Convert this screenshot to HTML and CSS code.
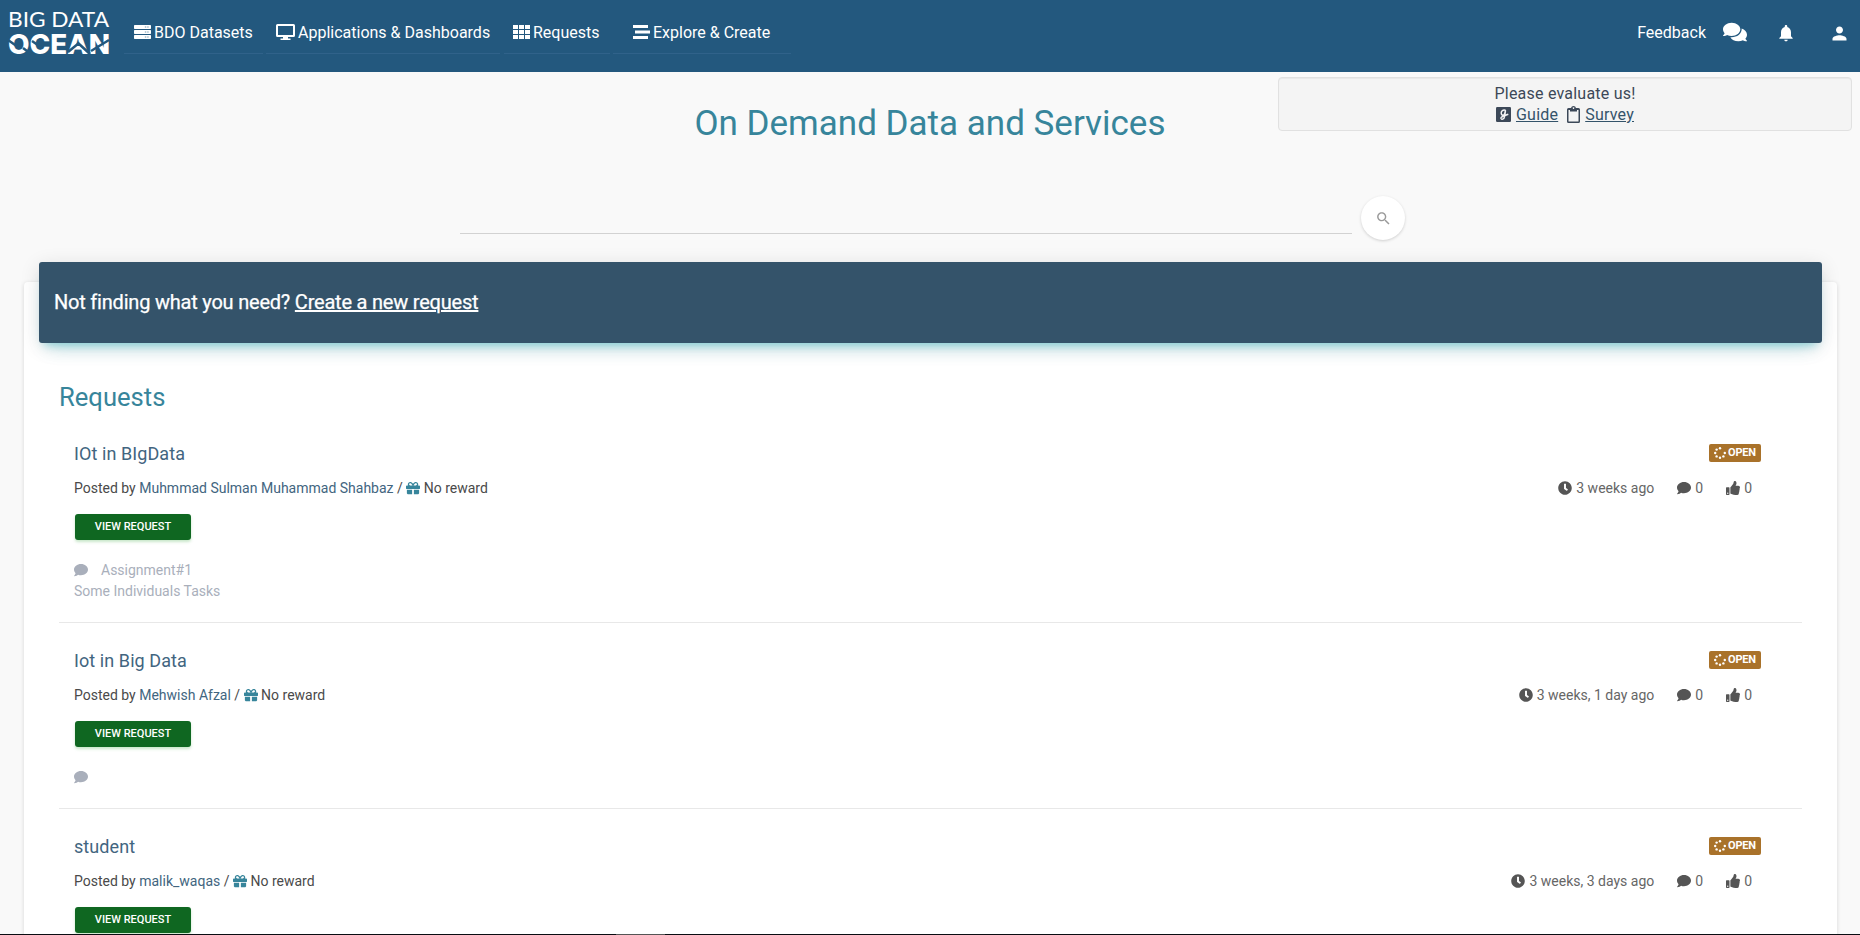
FILE: index.html
```html
<!DOCTYPE html>
<html lang="en">
<head>
<meta charset="utf-8">
<title>On Demand Data and Services</title>
<link rel="stylesheet" href="styles.css">
</head>
<body>
<svg class="defs" width="0" height="0">
  <symbol id="comment" viewBox="0 0 512 512"><path d="M256 32C114.6 32 0 125.1 0 240c0 49.6 21.4 95 57 130.700C44.500 421.100 2.700 466 2.200 466.500c-2.200 2.300-2.800 5.700-1.500 8.700S4.800 480 8 480c66.300 0 116-31.800 140.600-51.400 32.700 12.300 69 19.400 107.400 19.400 141.400 0 256-93.100 256-208S397.400 32 256 32z"/></symbol>
  <symbol id="clock" viewBox="0 0 512 512"><path d="M256 8C119 8 8 119 8 256s111 248 248 248 248-111 248-248S393 8 256 8zm57.100 350.100L224.900 294c-3.100-2.300-4.900-5.900-4.900-9.700V116c0-6.600 5.400-12 12-12h48c6.600 0 12 5.400 12 12v137.700l63.500 46.200c5.400 3.900 6.500 11.400 2.600 16.800l-28.200 38.800c-3.900 5.300-11.400 6.500-16.800 2.600z"/></symbol>
  <symbol id="thumb" viewBox="0 0 512 512"><path d="M104 224H24c-13.255 0-24 10.745-24 24v240c0 13.255 10.745 24 24 24h80c13.255 0 24-10.745 24-24V248c0-13.255-10.745-24-24-24zM64 472c-13.255 0-24-10.745-24-24s10.745-24 24-24 24 10.745 24 24-10.745 24-24 24zM384 81.452c0 42.416-25.970 66.208-33.277 94.548h101.723c33.397 0 59.397 27.746 59.553 58.098.084 17.938-7.546 37.249-19.439 49.197l-.11.11c9.836 23.337 8.237 56.037-9.308 79.469 8.681 25.895-.069 57.704-16.382 74.757 4.298 17.598 2.244 32.575-6.148 44.632C440.202 511.587 389.616 512 346.839 512l-2.845-.001c-48.287-.017-87.806-17.598-119.560-31.725-15.957-7.099-36.821-15.887-52.651-16.178-6.540-.120-11.783-5.457-11.783-11.998v-213.770c0-3.200 1.282-6.271 3.558-8.521 39.614-39.144 56.648-80.587 89.117-113.111 14.804-14.832 20.188-37.236 25.393-58.902C282.515 39.293 291.817 0 312 0c24 0 72 8 72 81.452z"/></symbol>
  <symbol id="gift" viewBox="0 0 512 512"><path d="M32 448c0 17.700 14.300 32 32 32h160V320H32v128zm256 32h160c17.700 0 32-14.300 32-32V320H288v160zm192-320h-42.100c6.200-12.100 10.100-25.500 10.100-40 0-48.500-39.500-88-88-88-41.600 0-68.500 21.300-103 68.300-34.500-47-61.400-68.300-103-68.300-48.500 0-88 39.500-88 88 0 14.500 3.800 27.900 10.100 40H32c-17.700 0-32 14.300-32 32v80c0 8.800 7.200 16 16 16h480c8.800 0 16-7.200 16-16v-80c0-17.700-14.300-32-32-32zm-326.100 0c-22.100 0-40-17.900-40-40s17.900-40 40-40c19.900 0 34.600 3.300 86.100 80h-86.100zm206.100 0h-86.100c51.400-76.500 65.700-80 86.100-80 22.100 0 40 17.900 40 40s-17.900 40-40 40z"/></symbol>
  <symbol id="spinner" viewBox="0 0 12 12"><circle cx="6" cy="1.300" r="1.200"/><circle cx="2.600" cy="2.600" r="1.200"/><circle cx="1.200" cy="6" r="1.200"/><circle cx="2.600" cy="9.400" r="1.200"/><circle cx="6" cy="10.800" r="1.200"/><circle cx="9.400" cy="9.400" r="1.200"/><circle cx="10.800" cy="6" r="1.200"/></symbol>
</svg>

<header class="navbar">
  <svg class="logo" width="101" height="44" viewBox="0 0 101 44">
    <text class="logo-top" x="-1" y="16.700" textLength="101" lengthAdjust="spacingAndGlyphs">BIG DATA</text>
    <text class="logo-bottom" x="-1" y="44" textLength="102" lengthAdjust="spacingAndGlyphs">OCEAN</text>
    <path class="logo-cut" d="M-1 30 9 37M14 38l8 6M23 31l10 7M48.500 31h11M48.500 38h11M59 42l11-9M69 33l12 11M82 41l18-11"/>
  </svg>
  <nav class="menu">
    <a class="menu-item datasets"><svg width="17" height="14" viewBox="0 0 18 14" preserveAspectRatio="none"><path d="M.7 0h16.600q.7 0 .7.700v2.600q0 .7-.7.700H.7Q0 4 0 3.300V.7Q0 0 .7 0zM.7 5h16.600q.7 0 .7.700v2.600q0 .7-.7.700H.7Q0 9 0 8.300V5.700Q0 5 .7 5zM.7 10h16.600q.7 0 .7.700v2.600q0 .7-.7.700H.7q-.7 0-.7-.7v-2.600q0-.7.700-.7z"/><path class="slot" d="M11.500 2h1.500m1 0h1.500m-4 5h1.500m1 0h1.500m-4 5h1.500m1 0h1.500"/></svg><span>BDO Datasets</span></a>
    <a class="menu-item apps"><svg width="19" height="16" viewBox="0 0 19 16"><path fill-rule="evenodd" d="M1.500 0h16Q19 0 19 1.500v10q0 1.500-1.500 1.500H12v1.500h2.500V16h-10v-1.500H7V13H1.500Q0 13 0 11.500v-10Q0 0 1.500 0zM2 2v9h15V2z"/></svg><span>Applications &amp; Dashboards</span></a>
    <a class="menu-item requests"><svg width="17" height="14" viewBox="0 0 17 14"><path d="M0 0h5v4H0zM6 0h5v4H6zM12 0h5v4h-5zM0 5h5v4H0zM6 5h5v4H6zM12 5h5v4h-5zM0 10h5v4H0zM6 10h5v4H6zM12 10h5v4h-5z"/></svg><span>Requests</span></a>
    <a class="menu-item explore"><svg width="17" height="14" viewBox="0 0 17 14"><path d="M0 0h15v3H0zM2 5.500h15v3H2zM0 11h15v3H0z"/></svg><span>Explore &amp; Create</span></a>
  </nav>
  <div class="user-nav">
    <span class="feedback">Feedback</span>
    <svg class="chat" width="24" height="20" viewBox="0 16 576 480"><path d="M416 192c0-88.400-93.100-160-208-160S0 103.600 0 192c0 34.300 14.100 65.900 38 92-13.400 30.200-35.500 54.200-35.800 54.500-2.200 2.300-2.800 5.700-1.500 8.700S4.800 352 8 352c36.600 0 66.900-12.300 88.700-25 32.200 15.700 70.300 25 111.300 25 114.900 0 208-71.600 208-160zm122 220c23.900-26 38-57.700 38-92 0-66.900-53.500-124.200-129.300-148.100.9 6.600 1.300 13.300 1.300 20.100 0 105.900-107.700 192-240 192-10.800 0-21.300-.8-31.700-1.900C207.800 439.600 281.800 480 368 480c41 0 79.100-9.200 111.300-25 21.800 12.700 52.100 25 88.700 25 3.200 0 6.100-1.900 7.300-4.800 1.300-2.900.7-6.300-1.500-8.700-.3-.3-22.400-24.200-35.800-54.500z"/></svg>
    <svg class="bell" width="20" height="20" viewBox="0 0 24 24"><path d="M12 22c1.100 0 2-.9 2-2h-4c0 1.100.89 2 2 2zm6-6v-5c0-3.070-1.640-5.640-4.500-6.320V4c0-.83-.67-1.500-1.500-1.500s-1.500.67-1.500 1.500v.68C7.630 5.360 6 7.920 6 11v5l-2 2v1h16v-1l-2-2z"/></svg>
    <svg class="person" width="21" height="21" viewBox="0 0 24 24"><path d="M12 12c2.210 0 4-1.790 4-4s-1.790-4-4-4-4 1.790-4 4 1.790 4 4 4zm0 2c-2.670 0-8 1.340-8 4v2h16v-2c0-2.660-5.330-4-8-4z"/></svg>
  </div>
</header>

<section class="hero">
  <h1>On Demand Data and Services</h1>
  <aside class="evaluate">
    <div>Please evaluate us!</div>
    <div class="evaluate-links">
      <svg width="15" height="15" viewBox="0 0 15 15"><rect width="15" height="15" rx="1.200"/><path class="g-mark" d="M9.500 3.300C7 2.500 5.200 4 5.200 6s1.500 2.800 2.800 1.700S9.500 3.300 9.500 3.300L8.600 9.500C8.200 12.500 5.300 13 4.900 11.200 4.700 9.500 8 9 12.300 7.200"/></svg>
      <a class="guide">Guide</a>
      <svg class="clipboard" width="13" height="17" viewBox="0 0 13 17"><path fill-rule="evenodd" d="M1.500 2H4Q4.500 0 6.500 0T9 2h2.500Q13 2 13 3.500v12q0 1.500-1.500 1.500h-10Q0 17 0 15.500v-12Q0 2 1.500 2zm0 2v11.500h10V4H10v1.500H3V4zM6.500 1.200a.8.8 0 1 0 .01 0z"/></svg>
      <a class="survey">Survey</a>
    </div>
  </aside>
  <form class="search">
    <input type="text" aria-label="Search">
    <button type="button" aria-label="Search"><svg width="17" height="17" viewBox="0 0 24 24"><path d="M15.500 14h-.79l-.28-.27C15.410 12.590 16 11.110 16 9.500 16 5.910 13.090 3 9.500 3S3 5.910 3 9.500 5.910 16 9.500 16c1.610 0 3.090-.59 4.230-1.570l.27.280v.79l5 4.990L20.490 19l-4.990-5zm-6 0C7.010 14 5 11.990 5 9.500S7.010 5 9.500 5 14 7.010 14 9.500 11.990 14 9.500 14z"/></svg></button>
  </form>
</section>

<main class="card">
  <div class="banner"><span>Not finding what you need? <a>Create a new request</a></span></div>
  <h2>Requests</h2>

  <article class="request">
    <div class="info">
      <h3>IOt in BIgData</h3>
      <p class="posted">Posted by <a>Muhmmad Sulman Muhammad Shahbaz</a> / <svg class="icon gift"><use href="#gift"/></svg> No reward</p>
      <button class="view" type="button">VIEW REQUEST</button>
      <p class="note"><svg class="icon"><use href="#comment"/></svg><span class="note-text">Assignment#1</span><br>Some Individuals Tasks</p>
    </div>
    <div class="status">
      <span class="badge"><svg><use href="#spinner"/></svg>OPEN</span>
      <div class="meta"><span><svg class="icon"><use href="#clock"/></svg>3 weeks ago</span><span><svg class="icon"><use href="#comment"/></svg>0</span><span><svg class="icon"><use href="#thumb"/></svg>0</span></div>
    </div>
  </article>

  <article class="request">
    <div class="info">
      <h3>Iot in Big Data</h3>
      <p class="posted">Posted by <a>Mehwish Afzal</a> / <svg class="icon gift"><use href="#gift"/></svg> No reward</p>
      <button class="view" type="button">VIEW REQUEST</button>
      <p class="note"><svg class="icon"><use href="#comment"/></svg></p>
    </div>
    <div class="status">
      <span class="badge"><svg><use href="#spinner"/></svg>OPEN</span>
      <div class="meta"><span><svg class="icon"><use href="#clock"/></svg>3 weeks, 1 day ago</span><span><svg class="icon"><use href="#comment"/></svg>0</span><span><svg class="icon"><use href="#thumb"/></svg>0</span></div>
    </div>
  </article>

  <article class="request">
    <div class="info">
      <h3>student</h3>
      <p class="posted">Posted by <a>malik_waqas</a> / <svg class="icon gift"><use href="#gift"/></svg> No reward</p>
      <button class="view" type="button">VIEW REQUEST</button>
    </div>
    <div class="status">
      <span class="badge"><svg><use href="#spinner"/></svg>OPEN</span>
      <div class="meta"><span><svg class="icon"><use href="#clock"/></svg>3 weeks, 3 days ago</span><span><svg class="icon"><use href="#comment"/></svg>0</span><span><svg class="icon"><use href="#thumb"/></svg>0</span></div>
    </div>
  </article>
</main>
<div class="bottom-edge"></div>
</body>
</html>
```

FILE: styles.css
```css
* { box-sizing: border-box; }
body {
  margin: 0;
  height: 935px;
  overflow: hidden;
  background: #f9f9f9;
  color: #3c4858;
  font: 400 14px/21px Roboto, "Liberation Sans", sans-serif;
}
h1, h2, h3, p { margin: 0; font-weight: 400; }
svg { display: block; fill: currentColor; flex: none; }
.defs { position: absolute; }

.navbar {
  display: flex;
  height: 72px;
  padding-left: 9px;
  background: #23587e;
  color: #fff;
  font-size: 16px;
  font-weight: 400;
}
.logo { margin-top: 10px; overflow: visible; }
.logo-top { font: 400 21px Lato, sans-serif; }
.logo-bottom { font: 800 27px Inter, sans-serif; }
.logo-cut { fill: none; stroke: #23587e; stroke-width: 2.5; }
.menu { display: flex; margin-left: 14px; }
.menu-item {
  display: flex;
  height: 54px;
  align-items: center;
  gap: 3px;
  padding: 11px 0 0 10px;
  border-bottom: 1px solid #30628a;
  white-space: nowrap;
}
.menu-item span { margin-top: 1px; }
.datasets { width: 139px; }
.apps { width: 234px; margin-left: 3px; }
.requests { width: 106px; margin-left: 4px; padding-left: 9px; }
.explore { width: 178px; margin-left: 3px; padding-left: 20px; }
.slot { stroke: #23587e; stroke-width: 1.2; opacity: .6; }
.user-nav { display: flex; align-items: center; height: 64px; margin-left: auto; padding-right: 10px; }
.feedback { margin-top: 1px; }
.chat { margin-left: 17px; }
.bell { margin-left: 29px; margin-top: 2px; }
.person { margin-left: 33px; margin-top: 2px; }

.hero {
  display: grid;
  grid-template: 159px 51px / 1278px 574px 8px;
}
h1 {
  grid-area: 1 / 1 / 2 / 4;
  padding-top: 31px;
  text-align: center;
  font-size: 35px;
  line-height: 42px;
  color: #37859b;
}
.evaluate {
  grid-area: 1 / 2;
  height: 54px;
  margin-top: 5px;
  padding-top: 5px;
  border: 1px solid #e1e1e1;
  border-radius: 4px;
  background: #f4f4f4;
  box-shadow: inset 0 1px 1px rgba(0, 0, 0, .05);
  text-align: center;
  font-size: 16px;
  letter-spacing: .22px;
}
.evaluate-links { display: flex; justify-content: center; align-items: center; }
.evaluate a { text-decoration: underline; color: #34536a; }
.guide { margin-left: 5px; }
.clipboard { margin: 0 5px 0 9px; }
.g-mark { fill: none; stroke: #f4f4f4; stroke-width: 1.5; }
.search { grid-area: 1 / 1 / 3 / 4; display: flex; align-self: start; width: 945px; margin: 124px 0 0 460px; }
.search input { width: 892px; height: 38px; padding: 0; border: 0; border-bottom: 1px solid #d2d2d2; background: none; }
.search button {
  display: grid;
  place-items: center;
  width: 44px;
  height: 44px;
  margin-left: 9px;
  padding: 0;
  border: 0;
  border-radius: 50%;
  background: #fff;
  color: #999;
  box-shadow: 0 1px 3px rgba(0, 0, 0, .17);
}

.card {
  display: flex;
  flex-direction: column;
  height: 680px;
  width: 1813px;
  margin-left: 24px;
  padding: 0 35px;
  border-radius: 4px;
  background: #fff;
  box-shadow: 0 1px 4px rgba(0, 0, 0, .14);
}
.banner {
  flex: none;
  display: flex;
  align-items: center;
  height: 81px;
  margin: -20px -20px 0;
  padding: 0 15px;
  border-radius: 3px;
  background: #34536a;
  color: #fff;
  box-shadow: 0 12px 20px -10px rgba(0, 172, 193, .28), 0 4px 20px rgba(0, 0, 0, .12), 0 7px 8px -5px rgba(0, 172, 193, .3);
  font-size: 20px;
  letter-spacing: -.21px;
  -webkit-text-stroke: .25px #fff;
}
.banner a { text-decoration: underline; }
h2 { margin-top: 36px; height: 37px; font-size: 25.6px; line-height: 36px; color: #37859b; }
.request {
  flex: none;
  display: flex;
  justify-content: space-between;
  padding: 25px 0 20px 15px;
  border-bottom: 1px solid #e8e8e8;
}
h3 { font-size: 18px; line-height: 26px; letter-spacing: .08px; color: #426580; }
.posted { margin-top: 11px; height: 21px; color: #4a4a4a; white-space: nowrap; }
.posted a { color: #426580; }
.icon { width: 14px; height: 14px; }
.posted .icon { display: inline-block; vertical-align: -2px; color: #37859b; }
.view {
  display: block;
  width: 116px;
  height: 26px;
  margin: 15px 0 0 1px;
  padding: 0;
  border: 0;
  border-radius: 3px;
  background: #0f6721;
  color: #fff;
  box-shadow: 0 2px 3px rgba(76, 175, 80, .3);
  font: 500 11px/24px Roboto, sans-serif;
}
.note { margin-top: 20px; min-height: 21px; color: #a9afbb; }
.note .icon { display: inline-block; vertical-align: -2px; }
.note-text { margin-left: 13px; }
.status { display: flex; flex-direction: column; align-items: flex-end; padding-right: 41px; color: #666; }
.badge {
  display: flex;
  align-items: center;
  width: 52px;
  height: 18px;
  margin-top: 3px;
  padding: 0 0 1px 5px;
  border-radius: 2px;
  background: #a9722a;
  color: #fff;
  font-size: 11px;
  font-weight: 700;
  letter-spacing: -.2px;
}
.badge svg { width: 12px; height: 12px; margin-right: 2px; }
.meta { display: flex; gap: 23px; margin: 16px 9px 0 0; }
.meta span { display: flex; align-items: center; gap: 4px; }
.meta .icon { margin-top: -1px; color: #555; }
.bottom-edge { position: absolute; left: 0; right: 0; top: 934px; height: 1px; background: linear-gradient(90deg, #0a0d12 616px, #555 616px, #555 665px, #0a0d12 665px); }
```
